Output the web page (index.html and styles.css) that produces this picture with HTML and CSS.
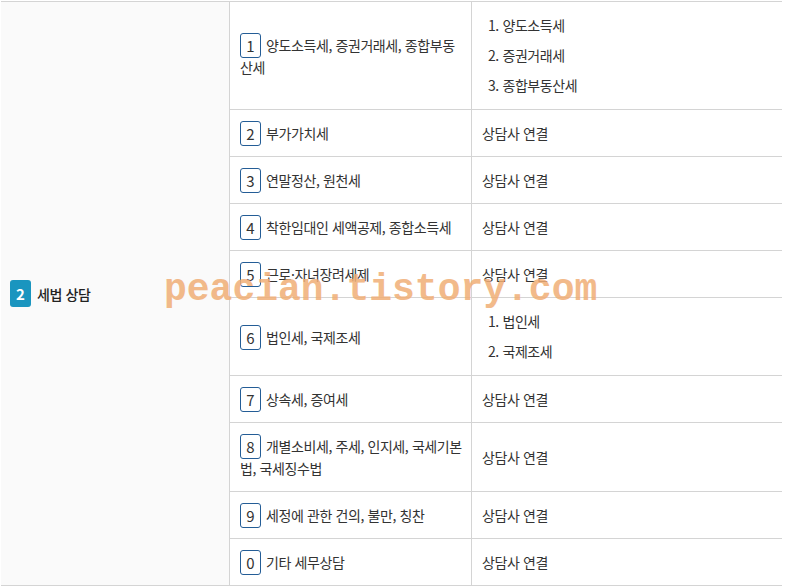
FILE: index.html
```html
<!DOCTYPE html>
<html lang="ko">
<head>
<meta charset="utf-8">
<link rel="stylesheet" href="styles.css">
</head>
<body>
<div class="wrap">
<table class="menu">
  <tr>
    <td class="cat" rowspan="10"><span class="cat-badge">2</span><span class="cat-name">세법 상담</span></td>
    <td class="item"><span class="num">1</span>양도소득세, 증권거래세, 종합부동산세</td>
    <td class="sub"><ol><li>양도소득세</li><li>증권거래세</li><li>종합부동산세</li></ol></td>
  </tr>
  <tr>
    <td class="item"><span class="num">2</span>부가가치세</td>
    <td class="sub">상담사 연결</td>
  </tr>
  <tr>
    <td class="item"><span class="num">3</span>연말정산, 원천세</td>
    <td class="sub">상담사 연결</td>
  </tr>
  <tr>
    <td class="item"><span class="num">4</span>착한임대인 세액공제, 종합소득세</td>
    <td class="sub">상담사 연결</td>
  </tr>
  <tr>
    <td class="item"><span class="num">5</span>근로·자녀장려세제</td>
    <td class="sub">상담사 연결</td>
  </tr>
  <tr>
    <td class="item"><span class="num">6</span>법인세, 국제조세</td>
    <td class="sub"><ol><li>법인세</li><li>국제조세</li></ol></td>
  </tr>
  <tr>
    <td class="item"><span class="num">7</span>상속세, 증여세</td>
    <td class="sub">상담사 연결</td>
  </tr>
  <tr>
    <td class="item"><span class="num">8</span>개별소비세, 주세, 인지세, 국세기본법, 국세징수법</td>
    <td class="sub">상담사 연결</td>
  </tr>
  <tr>
    <td class="item"><span class="num">9</span>세정에 관한 건의, 불만, 칭찬</td>
    <td class="sub">상담사 연결</td>
  </tr>
  <tr>
    <td class="item"><span class="num">0</span>기타 세무상담</td>
    <td class="sub">상담사 연결</td>
  </tr>
</table>
<div class="watermark">peacian.tistory.com</div>
</div>
</body>
</html>
```
FILE: styles.css
```css
html, body {
  margin: 0;
  padding: 0;
  background: #ffffff;
}
body {
  font-family: "Noto Sans CJK KR", "Noto Sans", sans-serif;
  font-size: 14px;
  letter-spacing: -0.4px;
  color: #333333;
}
.wrap {
  position: relative;
  padding: 1px 0 0 1px;
}
.menu {
  border-collapse: collapse;
  width: 781px;
  table-layout: fixed;
}
.menu td {
  border-top: 1px solid #d4d4d4;
  border-bottom: 1px solid #d4d4d4;
  padding: 12px 10px;
  line-height: 22px;
  vertical-align: middle;
}
.cat {
  width: 209px;
  background: #fafafa;
  border-right: 1px solid #d4d4d4;
  padding-left: 9px !important;
}
.cat-badge {
  display: inline-block;
  width: 21px;
  height: 27px;
  line-height: 27px;
  border-radius: 3px;
  background: #1a95bf;
  color: #ffffff;
  font-weight: 700;
  text-align: center;
  font-size: 15px;
  letter-spacing: 0;
  vertical-align: middle;
  margin-right: 6px;
}
.cat-name {
  color: #222222;
  font-weight: 500;
  vertical-align: middle;
}
.item {
  width: 224px;
  border-right: 1px solid #d4d4d4;
  padding-right: 7px !important;
}
.num {
  display: inline-block;
  box-sizing: border-box;
  width: 21px;
  height: 25px;
  line-height: 23px;
  border: 1px solid #245d96;
  border-radius: 3px;
  text-align: center;
  font-size: 15px;
  letter-spacing: 0;
  color: #333333;
  vertical-align: top;
  margin: -1px 5px -2px 0;
}
.sub ol {
  margin: 0;
  padding: 0 0 0 6px;
  list-style-position: inside;
}
.sub li {
  line-height: 23px;
}
.sub li + li {
  margin-top: 7px;
}
.watermark {
  position: absolute;
  left: 164px;
  top: 268px;
  font-family: "Liberation Mono", monospace;
  font-size: 38px;
  font-weight: 700;
  letter-spacing: 0;
  color: #f0ae76;
  opacity: 0.85;
  pointer-events: none;
}
```
